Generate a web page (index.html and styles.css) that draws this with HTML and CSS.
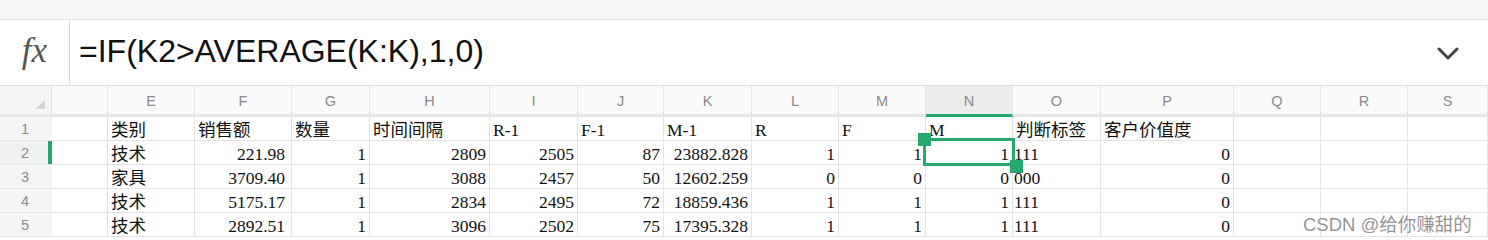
FILE: index.html
```html
<!DOCTYPE html>
<html lang="zh">
<head>
<meta charset="utf-8">
<title>Sheet</title>
<link rel="stylesheet" href="styles.css">
</head>
<body>
<div class="topbar"></div>
<div class="formula-bar">
  <div class="fx">fx</div>
  <div class="formula">=IF(K2&gt;AVERAGE(K:K),1,0)</div>
  <svg class="chevron" width="22" height="14" viewBox="0 0 22 14"><polyline points="2,2 11,11 20,2" fill="none" stroke="#444" stroke-width="3" stroke-linecap="round" stroke-linejoin="round"/></svg>
</div>
<div class="sheet">
  <div class="grid">
    <div class="ch corner"><span class="tri"></span></div>
    <div class="ch"></div>
    <div class="ch">E</div><div class="ch">F</div><div class="ch">G</div><div class="ch">H</div>
    <div class="ch">I</div><div class="ch">J</div><div class="ch">K</div><div class="ch">L</div>
    <div class="ch">M</div><div class="ch sel">N</div><div class="ch">O</div><div class="ch">P</div>
    <div class="ch">Q</div><div class="ch">R</div><div class="ch">S</div>

    <div class="rh">1</div>
    <div class="c"></div>
    <div class="c">类别</div><div class="c">销售额</div><div class="c">数量</div><div class="c">时间间隔</div>
    <div class="c">R-1</div><div class="c">F-1</div><div class="c">M-1</div><div class="c">R</div>
    <div class="c">F</div><div class="c">M</div><div class="c">判断标签</div><div class="c">客户价值度</div>
    <div class="c"></div><div class="c"></div><div class="c"></div>

    <div class="rh active">2</div>
    <div class="c"></div>
    <div class="c">技术</div><div class="c r f">221.98</div><div class="c r">1</div><div class="c r">2809</div>
    <div class="c r">2505</div><div class="c r">87</div><div class="c r">23882.828</div><div class="c r">1</div>
    <div class="c r">1</div><div class="c r">1</div><div class="c o">111</div><div class="c r">0</div>
    <div class="c"></div><div class="c"></div><div class="c"></div>

    <div class="rh">3</div>
    <div class="c"></div>
    <div class="c">家具</div><div class="c r f">3709.40</div><div class="c r">1</div><div class="c r">3088</div>
    <div class="c r">2457</div><div class="c r">50</div><div class="c r">12602.259</div><div class="c r">0</div>
    <div class="c r">0</div><div class="c r">0</div><div class="c o">000</div><div class="c r">0</div>
    <div class="c"></div><div class="c"></div><div class="c"></div>

    <div class="rh">4</div>
    <div class="c"></div>
    <div class="c">技术</div><div class="c r f">5175.17</div><div class="c r">1</div><div class="c r">2834</div>
    <div class="c r">2495</div><div class="c r">72</div><div class="c r">18859.436</div><div class="c r">1</div>
    <div class="c r">1</div><div class="c r">1</div><div class="c o">111</div><div class="c r">0</div>
    <div class="c"></div><div class="c"></div><div class="c"></div>

    <div class="rh">5</div>
    <div class="c"></div>
    <div class="c">技术</div><div class="c r f">2892.51</div><div class="c r">1</div><div class="c r">3096</div>
    <div class="c r">2502</div><div class="c r">75</div><div class="c r">17395.328</div><div class="c r">1</div>
    <div class="c r">1</div><div class="c r">1</div><div class="c o">111</div><div class="c r">0</div>
    <div class="c"></div><div class="c"></div><div class="c"></div>
  </div>
  <div class="selection"></div>
  <div class="handle h-tl"></div>
  <div class="handle h-br"></div>
  <div class="watermark">CSDN @给你赚甜的</div>
</div>
</body>
</html>
```
FILE: styles.css
```css
html, body {
  margin: 0;
  padding: 0;
  background: #ffffff;
}
body {
  width: 1488px;
  height: 240px;
  overflow: hidden;
}
.topbar {
  height: 19px;
  background: #f6f6f6;
  border-bottom: 1px solid #e2e2e2;
}
.formula-bar {
  display: flex;
  align-items: center;
  height: 65px;
  border-bottom: 1px solid #dedede;
}
.fx {
  width: 70px;
  height: 100%;
  border-right: 1px solid #dcdcdc;
  display: flex;
  align-items: center;
  justify-content: center;
  font-family: "Liberation Serif", serif;
  font-style: italic;
  font-size: 35px;
  color: #555555;
  box-sizing: border-box;
  padding-bottom: 3px;
}
.formula {
  flex: 1;
  padding-left: 9px;
  font-family: "Liberation Sans", Arial, sans-serif;
  font-size: 32px;
  color: #111111;
  padding-bottom: 3px;
}
.chevron {
  margin-right: 29px;
  margin-top: 2px;
}
.sheet {
  position: relative;
}
.grid {
  display: grid;
  grid-template-columns: 52px 56px 87px 97px 78px 120px 88px 86px 88px 87px 87px 87px 88px 133px 87px 87px 80px;
  grid-template-rows: 31px 24px 24px 24px 24px 24px;
}
.ch {
  box-sizing: border-box;
  background: #fafafa;
  border-right: 1px solid #e6e6e6;
  border-bottom: 3px solid #e6e6e6;
  display: flex;
  align-items: center;
  justify-content: center;
  font-family: "Liberation Sans", Arial, sans-serif;
  font-size: 14.5px;
  color: #8a8a8a;
  padding-top: 2px;
}
.ch.corner {
  background: #f5f5f5;
  position: relative;
  border-right: 1px solid #e2e2e2;
}
.tri {
  position: absolute;
  left: 35px;
  top: 14px;
  width: 0;
  height: 0;
  border-left: 10px solid transparent;
  border-bottom: 9px solid #d4d4d4;
}
.ch.sel {
  background: #ececec;
  border-bottom: 3px solid #26a96c;
}
.rh {
  box-sizing: border-box;
  background: #f5f5f5;
  border-bottom: 1px solid #e6e6e6;
  display: flex;
  align-items: center;
  justify-content: center;
  font-family: "Liberation Sans", Arial, sans-serif;
  font-size: 14.5px;
  color: #8a8a8a;
  padding-right: 2px;
}
.rh.active {
  background: #eef0f1;
  box-shadow: inset -4px 0 0 #26a96c;
}
.c {
  box-sizing: border-box;
  border-right: 1px solid #e3e3e3;
  border-bottom: 1px solid #e3e3e3;
  display: flex;
  align-items: flex-end;
  padding: 0 3px 0 3px;
  font-family: "Liberation Serif", "Noto Sans CJK SC", serif;
  font-size: 17.5px;
  line-height: 20px;
  color: #111111;
  white-space: nowrap;
  overflow: hidden;
}
.c.r {
  justify-content: flex-end;
}
.c.f {
  padding-right: 6px;
}
.c.o {
  padding-left: 1px;
}
.selection {
  position: absolute;
  left: 923px;
  top: 52px;
  width: 92px;
  height: 28px;
  box-sizing: border-box;
  border: 3px solid #26a96c;
}
.handle {
  position: absolute;
  width: 13px;
  height: 13px;
  background: #26a96c;
}
.h-tl {
  left: 918px;
  top: 47px;
}
.h-br {
  left: 1010px;
  top: 74px;
}
.watermark {
  position: absolute;
  left: 1303px;
  top: 124px;
  font-family: "Liberation Sans", "Noto Sans CJK SC", sans-serif;
  font-size: 18.5px;
  color: rgba(110, 110, 110, 0.75);
  text-shadow: 0 0 1px #ffffff;
  white-space: nowrap;
}
```
